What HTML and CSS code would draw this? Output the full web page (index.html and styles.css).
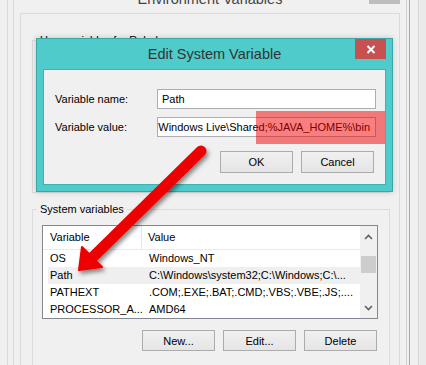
FILE: index.html
```html
<!DOCTYPE html>
<html lang="en">
<head>
    <meta charset="UTF-8">
    <meta name="viewport" content="width=device-width, initial-scale=1.0">
    <title>Edit System Variable</title>
    <link rel="stylesheet" href="styles.css">
</head>
<body>

    <div class="desk">
        <div class="backwin">
            <div class="envframe">
                <div class="envwin">
                    <div class="envtitle">
                        <span></span>
                        <span class="envtitle-text">Environment Variables</span>
                        <span class="envclose"></span>
                    </div>
                    <div class="envclient">
                        <!-- User variables (hidden behind the dialog) -->
                        <fieldset class="group">
                            <legend>User variables for Rahul</legend>
                            <div class="group-user-body"></div>
                        </fieldset>

                        <!-- System variables -->
                        <fieldset class="group group-system">
                            <legend>System variables</legend>
                            <div class="listview">
                                <div class="lv-main">
                                    <div class="lv-head">
                                        <div class="lv-col1">Variable</div>
                                        <div class="lv-col2">Value</div>
                                    </div>
                                    <div class="lv-row">
                                        <div class="lv-col1">OS</div>
                                        <div class="lv-col2">Windows_NT</div>
                                    </div>
                                    <div class="lv-row lv-row-hover">
                                        <div class="lv-col1">Path</div>
                                        <div class="lv-col2">C:\Windows\system32;C:\Windows;C:\...</div>
                                    </div>
                                    <div class="lv-row">
                                        <div class="lv-col1">PATHEXT</div>
                                        <div class="lv-col2">.COM;.EXE;.BAT;.CMD;.VBS;.VBE;.JS;....</div>
                                    </div>
                                    <div class="lv-row">
                                        <div class="lv-col1">PROCESSOR_A...</div>
                                        <div class="lv-col2">AMD64</div>
                                    </div>
                                </div>
                                <div class="lv-scroll">
                                    <div class="sb-btn">
                                        <svg width="9" height="6" viewBox="0 0 9 6"><polyline points="1,5 4.5,1.5 8,5" fill="none" stroke="#606060" stroke-width="1.6"/></svg>
                                    </div>
                                    <div class="sb-track"><div class="sb-thumb"></div></div>
                                    <div class="sb-btn">
                                        <svg width="9" height="6" viewBox="0 0 9 6"><polyline points="1,1 4.5,4.5 8,1" fill="none" stroke="#606060" stroke-width="1.6"/></svg>
                                    </div>
                                </div>
                            </div>
                            <div class="btn-row">
                                <button class="btn">New...</button>
                                <button class="btn">Edit...</button>
                                <button class="btn">Delete</button>
                            </div>
                        </fieldset>
                    </div>
                </div>
            </div>
        </div>
        <div class="right-strip"></div>
    </div>

    <!-- Edit System Variable dialog -->
    <div class="dialog">
        <div class="dialog-title">
            <span></span>
            <span class="dialog-title-text">Edit System Variable</span>
            <span class="dialog-close">
                <svg width="10" height="9" viewBox="0 0 10 9"><path d="M1.5 1 L8.5 8 M8.5 1 L1.5 8" stroke="#fff" stroke-width="2"/></svg>
            </span>
        </div>
        <div class="dialog-client">
            <div class="form-grid">
                <label class="form-label">Variable name:</label>
                <div class="field">Path</div>
                <label class="form-label">Variable value:</label>
                <div class="field field-value"><span>Windows Live\Shared;%JAVA_HOME%\bin</span></div>
            </div>
            <div class="dialog-buttons">
                <button class="btn btn-dlg">OK</button>
                <button class="btn btn-dlg">Cancel</button>
            </div>
        </div>
    </div>

    <!-- annotations -->
    <div class="highlight"></div>
    <svg class="arrow" width="426" height="365" viewBox="0 0 426 365">
        <defs>
            <filter id="shadow" x="-20%" y="-20%" width="140%" height="140%">
                <feDropShadow dx="2" dy="3" stdDeviation="2" flood-color="#000" flood-opacity="0.45"/>
            </filter>
        </defs>
        <g filter="url(#shadow)">
            <line x1="201" y1="151" x2="93" y2="257" stroke="#ec0000" stroke-width="11" stroke-linecap="round"/>
            <polygon points="79,270 82,247 102,267" fill="#ec0000" stroke="#ec0000" stroke-width="2" stroke-linejoin="round"/>
        </g>
    </svg>

</body>
</html>
```

FILE: styles.css
```css
html {
    overflow: hidden;
}

body {
    margin: 0;
    width: 426px;
    height: 365px;
    overflow: hidden;
    background: #f0f0f0;
    font-family: 'Liberation Sans', Arial, sans-serif;
    font-size: 11px;
    color: #000;
}

.desk {
    display: flex;
    height: 365px;
    padding-left: 7px;
}

.backwin {
    border-left: 1px solid #dadada;
    padding-left: 5px;
}

.envframe {
    border-right: 1px solid #a9a9a9;
    padding-right: 2px;
}

.envwin {
    border-left: 1px solid #d9d9d9;
    border-right: 1px solid #cfcfcf;
    padding: 0 6px;
    height: 365px;
    overflow: hidden;
}

.right-strip {
    flex: 1;
    margin-left: 8px;
    border-left: 1px solid #d6d6d6;
    background: #eaeaea;
}

/* outer window title (cut off at top) */
.envtitle {
    display: grid;
    grid-template-columns: 1fr auto 1fr;
    height: 13px;
}

.envtitle-text {
    font-size: 14.5px;
    line-height: 20px;
    margin-top: -11px;
    color: #444;
}

.envclose {
    justify-self: end;
    width: 31px;
    height: 4px;
    background: #bdbdbd;
}

.envclient {
    width: 380px;
    box-sizing: border-box;
    height: 352px;
    overflow: hidden;
    border: 1px solid #dadada;
    border-bottom: none;
    padding: 0 9px 0 11px;
}

/* group boxes */
.group {
    margin: 18px 0 0;
    padding: 0 4px;
    border: 1px solid #dcdcdc;
    min-width: 0;
}

.group legend {
    padding: 0 3px;
    line-height: 16px;
    font-size: 11px;
}

.group-user-body {
    height: 144px;
}

.group-system {
    margin-top: 8px;
    padding: 8px 11px 0 4px;
    height: 180px;
}

/* list view */
.listview {
    display: flex;
    margin-left: 5px;
    height: 92px;
    border: 1px solid #828790;
    background: #fff;
}

.lv-main {
    flex: 1;
}

.lv-head {
    display: grid;
    grid-template-columns: 99px 1fr;
    height: 23px;
    border-bottom: 1px solid #e3ebf5;
    line-height: 23px;
}

.lv-head .lv-col1 {
    padding-left: 7px;
    border-right: 1px solid #e5e5e5;
}

.lv-head .lv-col2 {
    padding-left: 6px;
}

.lv-row {
    display: grid;
    grid-template-columns: 101px 1fr;
    height: 17px;
    line-height: 17px;
    margin-left: 5px;
    white-space: nowrap;
}

.lv-row .lv-col1 {
    padding-left: 2px;
}

.lv-row-hover {
    background: #efefef;
}

.lv-scroll {
    width: 17px;
    background: #f0f0f0;
    display: flex;
    flex-direction: column;
}

.sb-btn {
    height: 21px;
    display: flex;
    align-items: center;
    justify-content: center;
}

.sb-track {
    flex: 1;
    padding-top: 9px;
}

.sb-thumb {
    margin-left: 1px;
    width: 15px;
    height: 17px;
    background: #cdcdcd;
}

/* buttons */
.btn-row {
    display: flex;
    justify-content: flex-end;
    gap: 8px;
    margin: 11px 1px 0 0;
}

.btn {
    width: 73px;
    height: 21px;
    padding: 0;
    border: 1px solid #acacac;
    background: linear-gradient(#f0f0f0, #e5e5e5);
    font-family: inherit;
    font-size: 11px;
    color: #000;
}

/* dialog */
.dialog {
    position: absolute;
    left: 36px;
    top: 38px;
    width: 357px;
    height: 154px;
    box-sizing: border-box;
    background: #4ecbca;
    border: 1px solid #3aa6a5;
    padding: 0 6px 6px;
    box-shadow: 0 0 6px rgba(0, 0, 0, 0.18);
}

.dialog-title {
    display: grid;
    grid-template-columns: 1fr auto 1fr;
    height: 30px;
}

.dialog-title-text {
    font-size: 14.5px;
    line-height: 30px;
    color: #333;
}

.dialog-close {
    justify-self: end;
    width: 31px;
    height: 20px;
    background: #c75050;
    display: flex;
    align-items: center;
    justify-content: center;
}

.dialog-client {
    height: 116px;
    box-sizing: border-box;
    background: #f0f0f0;
    border: 1px solid #3fb3b2;
    padding: 19px 9px 0 11px;
}

.form-grid {
    display: grid;
    grid-template-columns: 102px 1fr;
    row-gap: 8px;
    align-items: center;
}

.field {
    height: 20px;
    box-sizing: border-box;
    border: 1px solid #abadb3;
    background: #fff;
    padding: 0 4px;
    line-height: 18px;
    white-space: nowrap;
    overflow: hidden;
}

.field-value {
    display: flex;
    justify-content: flex-end;
    padding-right: 5px;
}

.dialog-buttons {
    display: flex;
    justify-content: flex-end;
    gap: 8px;
    margin: 14px 2px 0 0;
}

.btn-dlg {
    width: 73px;
    height: 22px;
}

/* annotations */
.highlight {
    position: absolute;
    left: 256px;
    top: 111px;
    width: 129px;
    height: 33px;
    background: rgba(240, 0, 0, 0.5);
}

.arrow {
    position: absolute;
    left: 0;
    top: 0;
    pointer-events: none;
}
```
